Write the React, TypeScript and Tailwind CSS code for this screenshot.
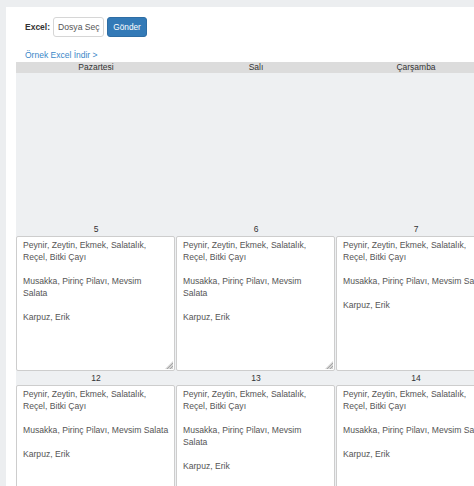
import React from "react";

const full = "Peynir, Zeytin, Ekmek, Salatalık,\nReçel, Bitki Çayı\n\n";
const wrapped = full + "Musakka, Pirinç Pilavı, Mevsim\nSalata\n\nKarpuz, Erik";
const single = full + "Musakka, Pirinç Pilavı, Mevsim Salata\n\nKarpuz, Erik";

const days = ["Pazartesi", "Salı", "Çarşamba"];

function Cell({ text }: { text: string }) {
  return (
    <div className="relative w-[159px] h-[135px]">
      <textarea
        readOnly
        wrap="off"
        defaultValue={text}
        className="block w-full h-full resize-none border border-[#cdcdcd] rounded-[2px] bg-white text-[#555] text-[8.6px] leading-[12px] px-[6px] pt-[2px] overflow-hidden outline-none"
      />
      <svg
        className="absolute right-[2px] bottom-[2px]"
        width="8"
        height="8"
        viewBox="0 0 8 8"
      >
        <path d="M8 0 L8 8 L0 8 Z" fill="#d4d4d4" />
        <path d="M8 2 L2 8 M8 5 L5 8" stroke="#9a9a9a" strokeWidth="0.8" />
      </svg>
    </div>
  );
}

function LabelRow({ nums }: { nums: string[] }) {
  return (
    <div className="grid grid-cols-[160px_160px_160px] h-[14px]">
      {nums.map((n) => (
        <div key={n} className="text-center text-[8.5px] leading-[14px] text-[#333]">
          {n}
        </div>
      ))}
    </div>
  );
}

export default function App() {
  return (
    <div className="w-[474px] h-[486px] overflow-hidden bg-[#eceef0] pt-[7px] pl-[6px] font-['Liberation_Sans',Arial,sans-serif]">
      <div className="bg-white w-[600px] h-[600px] pl-[10px] pt-[10px]">
        <div className="flex items-center pl-[9px] h-[20px]">
          <span className="font-bold text-[8.5px] text-[#333]">Excel:</span>
          <div className="ml-[3px] w-[51px] h-[20px] border border-[#d6d6d6] rounded-[3px] flex items-center pl-[4px] text-[8.6px] text-[#555] bg-white">
            Dosya Seç
          </div>
          <button className="ml-[3px] w-[40px] h-[20px] rounded-[3px] bg-[#337ab7] border border-[#2e6da4] text-white text-[8.3px] flex items-center justify-center">
            Gönder
          </button>
        </div>
        <div className="mt-[12px] pl-[9px] h-[12px] text-[8.5px] leading-[12px] text-[#3a87c8]">
          Örnek Excel İndir &gt;
        </div>
        <div className="mt-[1px] bg-[#eef0f2] w-[480px]">
          <div className="grid grid-cols-[160px_160px_160px] h-[11px] bg-[#dcdcdc]">
            {days.map((d) => (
              <div key={d} className="text-center text-[8.5px] leading-[11px] text-[#333]">
                {d}
              </div>
            ))}
          </div>
          <div className="h-[149px]" />
          <LabelRow nums={["5", "6", "7"]} />
          <div className="grid grid-cols-[160px_160px_160px]">
            <Cell text={wrapped} />
            <Cell text={wrapped} />
            <Cell text={single} />
          </div>
          <LabelRow nums={["12", "13", "14"]} />
          <div className="grid grid-cols-[160px_160px_160px]">
            <Cell text={single} />
            <Cell text={wrapped} />
            <Cell text={single} />
          </div>
        </div>
      </div>
    </div>
  );
}
